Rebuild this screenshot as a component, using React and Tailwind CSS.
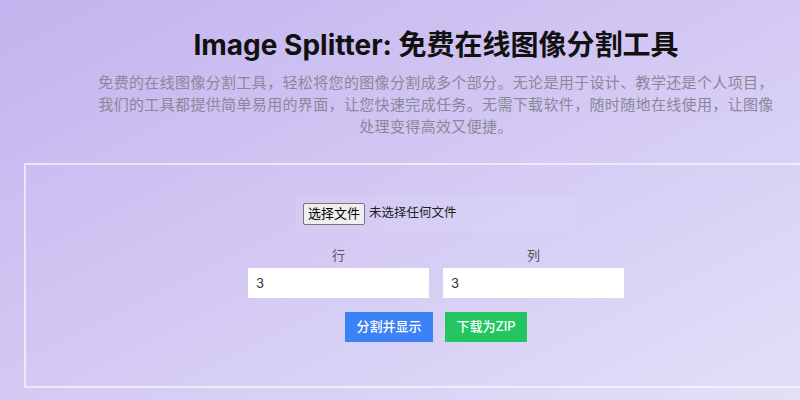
import React, { useState } from 'react';

// ── Number field with a small label above ────────────────────────────────────
const GridField = ({ label, value, onChange }) => (
  <div className="flex flex-col items-center gap-[3px]">
    <label className="text-[13px] leading-[20px] text-[#555]">{label}</label>
    <input
      type="text"
      value={value}
      onChange={(e) => onChange(e.target.value)}
      className="w-[181px] h-[30px] bg-white px-2 text-[13px] text-[#333] outline-none"
    />
  </div>
);

// ── Main page ─────────────────────────────────────────────────────────────────
const App = () => {
  const [rows, setRows] = useState('3');
  const [cols, setCols] = useState('3');

  return (
    <div
      className="w-full h-[400px] overflow-hidden bg-gradient-to-br from-[#c3b3ee] to-[#e4dff8]"
      style={{ fontFamily: 'Inter, "Noto Sans CJK SC", sans-serif' }}
    >
      <div className="w-[872px] flex flex-col items-center pt-[26px]">
        {/* ── Header ── */}
        <h1 className="text-[28px] leading-[38px] font-bold text-[#111]">
          Image Splitter: 免费在线图像分割工具
        </h1>
        <p className="mt-[8px] max-w-[688px] text-center text-[15px] leading-[22px] tracking-[0.35px] text-[#8a8798]">
          免费的在线图像分割工具，轻松将您的图像分割成多个部分。无论是用于设计、教学还是个人项目，我们的工具都提供简单易用的界面，让您快速完成任务。无需下载软件，随时随地在线使用，让图像处理变得高效又便捷。
        </p>

        {/* ── Tool card ── */}
        <div className="mt-[25px] w-[824px] border-2 border-white/60 pt-[30px] pb-[44px] flex flex-col items-center">
          <div className="w-[280px] h-[37px] bg-white/5 flex items-center pl-[7px]">
            <button className="h-[22px] px-[4px] bg-[#efefef] border border-[#767676] rounded-[2px] text-[13px] text-black">
              选择文件
            </button>
            <span className="ml-[4px] text-[12.5px] text-[#222]">未选择任何文件</span>
          </div>

          <div className="mt-[13px] flex gap-[14px]">
            <GridField label="行" value={rows} onChange={setRows} />
            <GridField label="列" value={cols} onChange={setCols} />
          </div>

          <div className="mt-[14px] flex gap-[12px]">
            <button className="w-[88px] h-[30px] bg-[#3b82f6] text-white text-[13px] font-medium">
              分割并显示
            </button>
            <button className="w-[82px] h-[30px] bg-[#22c55e] text-white text-[13px] font-medium">
              下载为ZIP
            </button>
          </div>
        </div>
      </div>
    </div>
  );
};

export default App;
